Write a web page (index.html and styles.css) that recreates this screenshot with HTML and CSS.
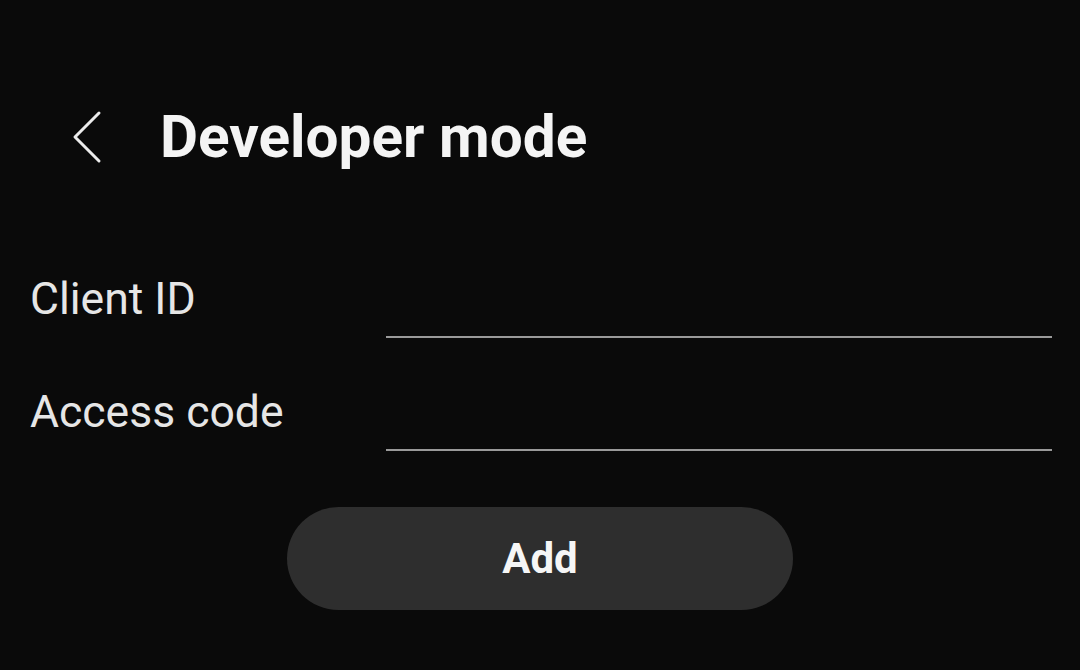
FILE: index.html
```html
<!DOCTYPE html>
<html>
  <head>
    <meta charset="utf-8" />
    <title>Developer mode</title>
    <link rel="stylesheet" href="styles.css">
  </head>
  <body>
    <header class="bar">
      <a class="back" href="#">
        <svg width="34" height="54" viewBox="0 0 34 54">
          <path d="M29 3 L5 27 L29 51" fill="none" stroke="#ececec" stroke-width="3" stroke-linecap="round" stroke-linejoin="round"/>
        </svg>
      </a>
      <h1>Developer mode</h1>
    </header>
    <form class="fields">
      <label class="row">
        <span class="name">Client ID</span>
        <input type="text">
      </label>
      <label class="row">
        <span class="name">Access code</span>
        <input type="text">
      </label>
      <div class="actions">
        <button type="button">Add</button>
      </div>
    </form>
  </body>
</html>
```

FILE: styles.css
```css
html { font-family: Roboto, "Noto Sans", sans-serif; }

body {
  margin: 0;
  background-color: #0a0a0a;
  color: #ececec;
  width: 1080px;
  height: 670px;
  overflow: hidden;
}

.bar {
  display: flex;
  align-items: center;
  height: 130px;
  padding: 72px 0 0 70px;
}
.back {
  display: flex;
  width: 90px;
}
.bar h1 {
  margin: 0;
  font-size: 58.5px;
  font-weight: 700;
  color: #f4f4f4;
}

.fields {
  padding: 4px 28px 0 30px;
}
.row {
  display: flex;
  align-items: flex-end;
  height: 113px;
}
.row:first-child {
  height: 134px;
}
.name {
  width: 356px;
  font-size: 44.5px;
  line-height: 1;
  padding-bottom: 19px;
  color: #e6e6e6;
}
.row input {
  flex: 1;
  height: 40px;
  background: none;
  border: 0;
  border-bottom: 2px solid #9a9a9a;
  outline: none;
  color: #fff;
  margin-bottom: 2px;
}

.actions {
  display: flex;
  justify-content: center;
  padding: 54px 0 0 0;
  margin-left: -30px;
  margin-right: -28px;
}
.actions button {
  width: 506px;
  height: 103px;
  border: 0;
  border-radius: 52px;
  background-color: #2e2e2e;
  color: #f6f6f6;
  font-family: Roboto, sans-serif;
  font-size: 42px;
  font-weight: 700;
}
```
